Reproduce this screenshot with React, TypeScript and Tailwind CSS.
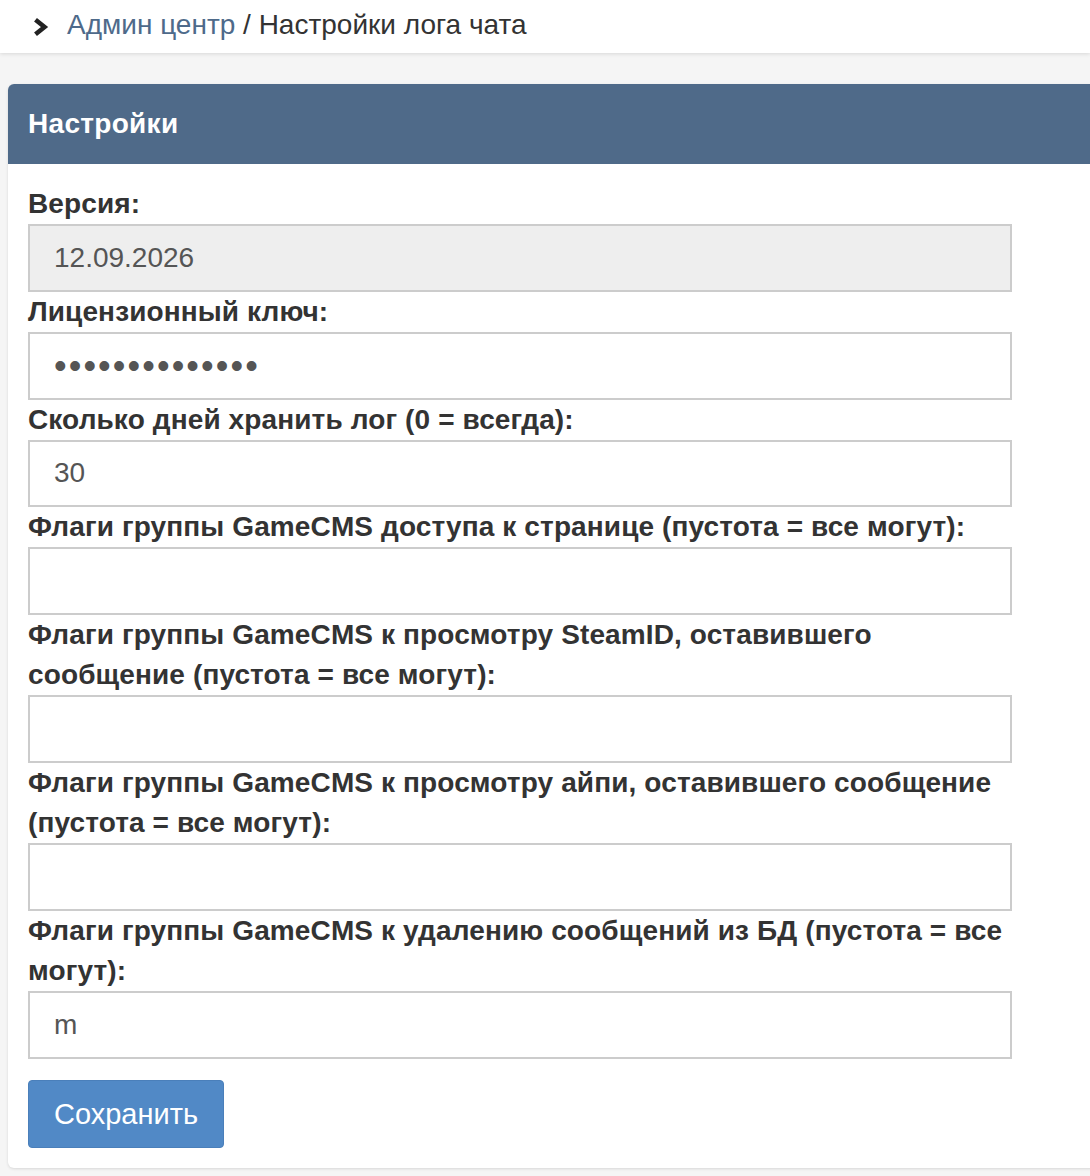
import React from "react";

const fields: { label: string; value?: string; type?: string; disabled?: boolean }[] = [
  { label: "Версия:", value: "12.09.2026", disabled: true },
  { label: "Лицензионный ключ:", value: "abcdefghijklmn", type: "password" },
  { label: "Сколько дней хранить лог (0 = всегда):", value: "30" },
  { label: "Флаги группы GameCMS доступа к странице (пустота = все могут):", value: "" },
  { label: "Флаги группы GameCMS к просмотру SteamID, оставившего сообщение (пустота = все могут):", value: "" },
  { label: "Флаги группы GameCMS к просмотру айпи, оставившего сообщение (пустота = все могут):", value: "" },
  { label: "Флаги группы GameCMS к удалению сообщений из БД (пустота = все могут):", value: "m" },
];

function Chevron() {
  return (
    <svg width="20" height="20" viewBox="0 0 20 20" className="shrink-0">
      <polyline points="4.5,2.8 13.5,10 4.5,17.2" fill="none" stroke="#222" strokeWidth="4.6" strokeLinejoin="miter" strokeLinecap="butt" />
    </svg>
  );
}

export default function App() {
  return (
    <div className="min-h-screen bg-[#f5f5f5] overflow-hidden font-['Liberation_Sans',Arial,sans-serif] text-[#333]">
      <div className="h-[53px] bg-white flex items-center pl-[31px] gap-[16px] shadow-[0_1px_4px_rgba(0,0,0,0.12)]">
        <Chevron />
        <div className="text-[28px] leading-[40px] pb-[4px]">
          <a className="text-[#4e6a8a]">Админ центр</a>
          <span className="text-[#333]"> / Настройки лога чата</span>
        </div>
      </div>

      <div className="mt-[31px] ml-2 mr-[-12px] bg-white rounded-md shadow-[0_1px_3px_rgba(0,0,0,0.12)]">
        <div className="h-[80px] bg-[#4f6a89] rounded-t-md flex items-center px-5">
          <h2 className="text-white font-bold text-[28px] leading-[40px] tracking-[0.3px]">Настройки</h2>
        </div>
        <div className="px-5 pt-[20px] pb-5">
          <form className="w-[984px] flex flex-col" onSubmit={(e) => e.preventDefault()}>
            {fields.map((f, i) => (
              <div key={i} className="flex flex-col">
                <label className="font-bold text-[28px] leading-[40px] tracking-[0.12px] text-[#333]">{f.label}</label>
                <input
                  type={f.type ?? "text"}
                  readOnly
                  defaultValue={f.value}
                  disabled={f.disabled}
                  className={
                    "h-[67.8px] w-full border-2 border-[#ccc] px-6 text-[#555] outline-none " +
                    (f.disabled ? "bg-[#eee]" : "bg-white") +
                    (f.type === "password" ? " text-[36px] tracking-[2.1px]" : " text-[28px]")
                  }
                />
              </div>
            ))}
            <div className="pt-[21px]">
              <button
                type="submit"
                className="h-[68px] px-[25px] bg-[#5189c6] border border-[#4a7fba] rounded-[4px] text-white text-[29px] leading-[40px]"
              >
                Сохранить
              </button>
            </div>
          </form>
        </div>
      </div>
    </div>
  );
}
